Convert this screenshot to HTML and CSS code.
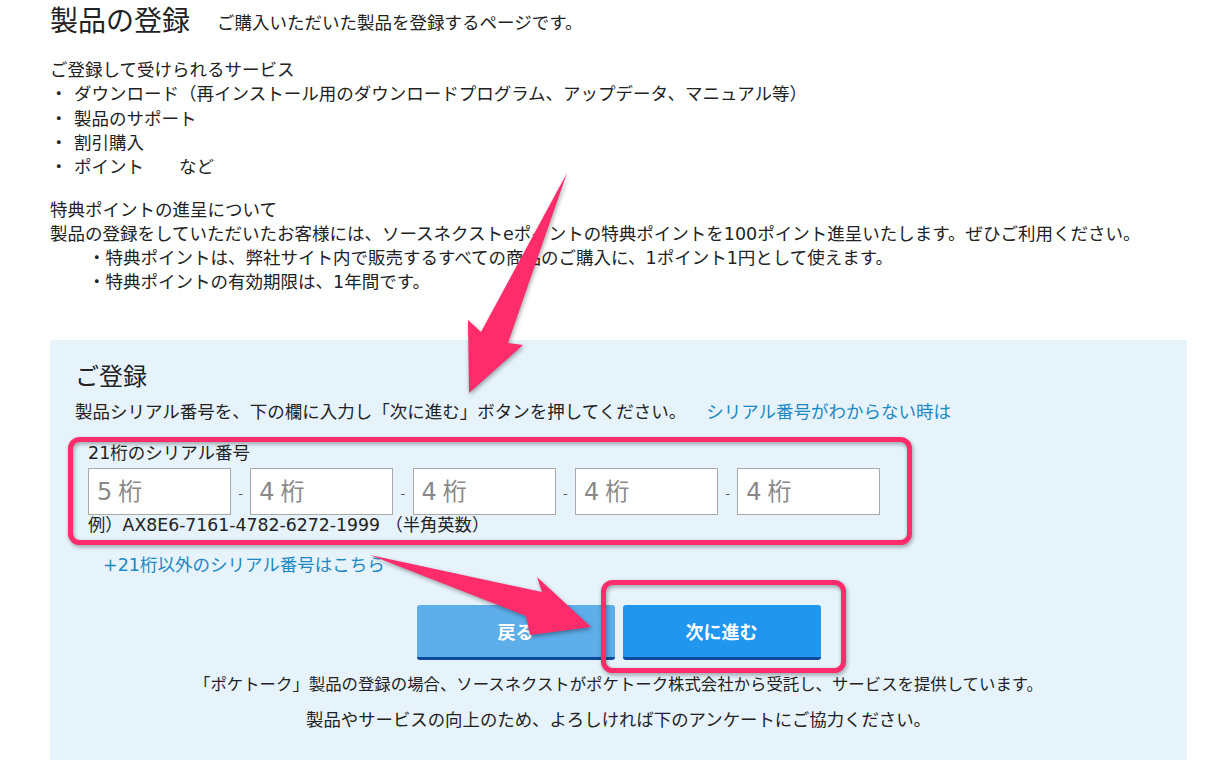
FILE: index.html
```html
<!DOCTYPE html>
<html lang="ja">
<head>
  <meta charset="UTF-8">
  <meta name="viewport" content="width=device-width, initial-scale=1.0">
  <title>製品の登録</title>
  <link rel="stylesheet" href="styles.css">
</head>
<body>
  <div class="page">
    <div class="content">
      <h1 class="title">製品の登録<span class="lead">ご購入いただいた製品を登録するページです。</span></h1>

      <!-- Services -->
      <div class="info">
        <p>ご登録して受けられるサービス</p>
        <ul class="services">
          <li>ダウンロード（再インストール用のダウンロードプログラム、アップデータ、マニュアル等）</li>
          <li>製品のサポート</li>
          <li>割引購入</li>
          <li>ポイント　　など</li>
        </ul>
      </div>

      <!-- Points -->
      <div class="info points">
        <p>特典ポイントの進呈について</p>
        <p>製品の登録をしていただいたお客様には、ソースネクストeポイントの特典ポイントを100ポイント進呈いたします。ぜひご利用ください。</p>
        <ul class="notes">
          <li>・特典ポイントは、弊社サイト内で販売するすべての商品のご購入に、1ポイント1円として使えます。</li>
          <li>・特典ポイントの有効期限は、1年間です。</li>
        </ul>
      </div>

      <!-- Registration form -->
      <section class="register">
        <h2>ご登録</h2>
        <p class="howto">製品シリアル番号を、下の欄に入力し「次に進む」ボタンを押してください。<a href="#" class="help">シリアル番号がわからない時は</a></p>

        <div class="serial">
          <div class="serial-label">21桁のシリアル番号</div>
          <div class="serial-inputs">
            <input type="text" placeholder="5桁">
            <span class="dash">-</span>
            <input type="text" placeholder="4桁">
            <span class="dash">-</span>
            <input type="text" placeholder="4桁">
            <span class="dash">-</span>
            <input type="text" placeholder="4桁">
            <span class="dash">-</span>
            <input type="text" placeholder="4桁">
          </div>
          <div class="serial-example">例）AX8E6-7161-4782-6272-1999 （半角英数）</div>
        </div>

        <a href="#" class="other">+21桁以外のシリアル番号はこちら</a>

        <div class="actions">
          <button class="btn back">戻る</button>
          <button class="btn next">次に進む</button>
        </div>

        <p class="foot">「ポケトーク」製品の登録の場合、ソースネクストがポケトーク株式会社から受託し、サービスを提供しています。</p>
        <p class="foot survey">製品やサービスの向上のため、よろしければ下のアンケートにご協力ください。</p>
      </section>
    </div>

    <!-- Annotation marks drawn over the page -->
    <svg class="marks" width="1217" height="777" viewBox="0 0 1217 777">
      <g class="mark">
        <rect x="70.5" y="439.5" width="839" height="103" rx="9"></rect>
        <rect x="603.5" y="582.5" width="240" height="88" rx="9"></rect>
        <polygon points="567,173 508,343 523,345 469,393 468,320 481,332"></polygon>
        <polygon points="370,555 542,592 537,577 591,627 530,635 526,616"></polygon>
      </g>
    </svg>
  </div>
</body>
</html>
```

FILE: styles.css
```css
/* Base */
body {
  margin: 0;
  font-family: "DejaVu Sans", "Noto Sans CJK JP", sans-serif;
  color: #222;
  background-color: #fff;
}

.page {
  position: relative;
  width: 1217px;
  height: 777px;
  overflow: hidden;
}

.content {
  padding: 0 30px 0 50px;
}

p, ul {
  margin: 0;
  padding: 0;
}

ul {
  list-style: none;
}

/* Heading */
.title {
  margin: 0;
  height: 44px;
  display: flex;
  align-items: center;
  font-size: 28px;
  font-weight: normal;
  line-height: 44px;
}

.title .lead {
  margin-left: 27px;
  font-size: 17.5px;
  line-height: 24px;
  padding-top: 2px;
}

/* Info blocks */
.info {
  margin-top: 14px;
  font-size: 17.5px;
  line-height: 24.3px;
}

.services li::before {
  content: "・";
  display: inline-block;
  width: 24px;
}

.points {
  margin-top: 19px;
  line-height: 24px;
}

.notes {
  padding-left: 38px;
}

/* Registration box */
.register {
  margin-top: 46px;
  height: 420px;
  box-sizing: border-box;
  padding: 22px 25px 0;
  background-color: #e6f3fb;
}

.register h2 {
  margin: 0;
  font-size: 24px;
  font-weight: normal;
  line-height: 30px;
}

.howto {
  margin-top: 8px;
  font-size: 17.5px;
  line-height: 24px;
}

.help {
  margin-left: 20px;
  color: #1d88c2;
  text-decoration: none;
}

.serial {
  margin-top: 19px;
  padding-left: 13px;
}

.serial-label {
  font-size: 17.5px;
  line-height: 20px;
}

.serial-inputs {
  margin-top: 5px;
  display: flex;
  align-items: center;
}

.serial-inputs input {
  width: 143px;
  height: 47px;
  box-sizing: border-box;
  margin: 0;
  padding: 0 8px;
  border: 1px solid #a9a9a9;
  background-color: #fff;
  font-family: inherit;
  font-size: 24px;
  letter-spacing: 6px;
  color: #333;
}

.serial-inputs input::placeholder {
  color: #888;
}

.dash {
  width: 19.3px;
  text-align: center;
  font-size: 13px;
  color: #555;
  padding-top: 4px;
}

.serial-example {
  font-size: 17.3px;
  line-height: 20px;
}

.other {
  display: block;
  margin-top: 18px;
  padding-left: 28px;
  font-size: 17.5px;
  line-height: 24px;
  color: #1d88c2;
  text-decoration: none;
}

/* Buttons */
.actions {
  margin-top: 28px;
  display: flex;
  justify-content: center;
  gap: 8px;
}

.btn {
  width: 198px;
  height: 55px;
  border: none;
  border-bottom: 3px solid #0d4a9c;
  border-radius: 3px;
  font-family: "Noto Sans CJK JP", sans-serif;
  font-size: 18px;
  font-weight: bold;
  color: #fff;
  cursor: pointer;
}

.btn.back {
  background-color: #5eaeea;
}

.btn.next {
  background-color: #2196ef;
}

.foot {
  margin-top: 13px;
  text-align: center;
  font-size: 16.4px;
  line-height: 24px;
}

.foot.survey {
  margin-top: 11px;
  font-size: 17.4px;
}

/* Annotation overlay */
.marks {
  position: absolute;
  top: 0;
  left: 0;
  pointer-events: none;
}

.mark {
  filter: drop-shadow(1px 2px 2px rgba(0, 0, 0, 0.35));
}

.mark rect {
  fill: none;
  stroke: #fe2c6a;
  stroke-width: 5;
}

.mark polygon {
  fill: #fe2c6a;
}
```
